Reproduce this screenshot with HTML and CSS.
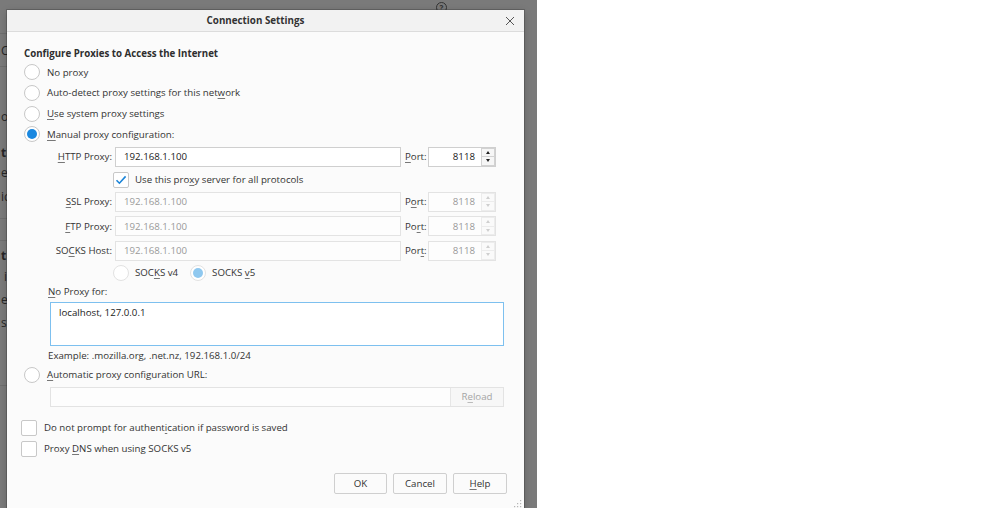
FILE: index.html
```html
<!DOCTYPE html>
<html>
<head>
<meta charset="utf-8">
<title>Connection Settings</title>
<link rel="stylesheet" href="styles.css">
</head>
<body>
<div class="screen">
  <div class="page">
    <div class="backdrop">
      <div class="bd-row h34 line"><span class="help-ico">?</span></div>
      <div class="bd-row h33 line">C</div>
      <div class="bd-row h39"></div>
      <div class="bd-row h20">o</div>
      <div class="bd-row h16"></div>
      <div class="bd-row h20 bold">t</div>
      <div class="bd-row h20">e</div>
      <div class="bd-row h28">ic</div>
      <div class="bd-row h9 line"></div>
      <div class="bd-row h22 line"></div>
      <div class="bd-row h4"></div>
      <div class="bd-row h20 bold">t</div>
      <div class="bd-row h22 ind">is</div>
      <div class="bd-row h24">el</div>
      <div class="bd-row h22">s</div>
      <div class="bd-row h53 line"></div>
    </div>

    <div class="dialog">
      <div class="titlebar">
        <div class="title">Connection Settings</div>
        <div class="close">
          <svg width="10" height="10" viewBox="0 0 10 10"><path d="M1 1L9 9M9 1L1 9" stroke="#555" stroke-width="1" fill="none"/></svg>
        </div>
      </div>
      <div class="body">
        <div class="heading">Configure Proxies to Access the Internet</div>
        <div class="radio-list">
          <div class="radio-row"><span class="radio"></span><span>No proxy</span></div>
          <div class="radio-row"><span class="radio"></span><span>Auto-detect proxy settings for this net<u>w</u>ork</span></div>
          <div class="radio-row"><span class="radio"></span><span><u>U</u>se system proxy settings</span></div>
          <div class="radio-row"><span class="radio on"></span><span><u>M</u>anual proxy configuration:</span></div>
        </div>

        <div class="proxy-block">
          <div class="prow first">
            <span class="plabel"><u>H</u>TTP Proxy:</span>
            <span class="field">192.168.1.100</span>
            <span class="portlabel"><u>P</u>ort:</span>
            <span class="port"><span class="port-val">8118</span><span class="spin"><span class="up"></span><span class="down"></span></span></span>
          </div>
          <div class="share-row">
            <span class="check">
              <svg width="14" height="14" viewBox="0 0 14 14"><path d="M2.5 7.2L5.4 10.2L11.6 3.4" stroke="#1a84d8" stroke-width="1.6" fill="none"/></svg>
            </span>
            <span>Use this pro<u>x</u>y server for all protocols</span>
          </div>
          <div class="prow ssl">
            <span class="plabel"><u>S</u>SL Proxy:</span>
            <span class="field dis">192.168.1.100</span>
            <span class="portlabel">P<u>o</u>rt:</span>
            <span class="port dis"><span class="port-val">8118</span><span class="spin"><span class="up"></span><span class="down"></span></span></span>
          </div>
          <div class="prow">
            <span class="plabel"><u>F</u>TP Proxy:</span>
            <span class="field dis">192.168.1.100</span>
            <span class="portlabel">Po<u>r</u>t:</span>
            <span class="port dis"><span class="port-val">8118</span><span class="spin"><span class="up"></span><span class="down"></span></span></span>
          </div>
          <div class="prow">
            <span class="plabel">SO<u>C</u>KS Host:</span>
            <span class="field dis">192.168.1.100</span>
            <span class="portlabel">Por<u>t</u>:</span>
            <span class="port dis"><span class="port-val">8118</span><span class="spin"><span class="up"></span><span class="down"></span></span></span>
          </div>
          <div class="socks-row">
            <span class="radio dis"></span><span class="socks-lbl">SOC<u>K</u>S v4</span>
            <span class="radio on dis v5"></span><span class="socks-lbl">SOCKS <u>v</u>5</span>
          </div>
        </div>

        <div class="noproxy-label"><u>N</u>o Proxy for:</div>
        <div class="textarea">localhost, 127.0.0.1</div>
        <div class="example">Example: .mozilla.org, .net.nz, 192.168.1.0/24</div>

        <div class="radio-row auto"><span class="radio"></span><span><u>A</u>utomatic proxy configuration URL:</span></div>
        <div class="url-row">
          <span class="url-field"></span>
          <span class="reload">R<u>e</u>load</span>
        </div>

        <div class="check-row first-check"><span class="check"></span><span>Do not prompt for authent<u>i</u>cation if password is saved</span></div>
        <div class="check-row"><span class="check"></span><span>Proxy <u>D</u>NS when using SOCKS v5</span></div>

        <div class="buttons">
          <span class="btn ok">OK</span>
          <span class="btn">Cancel</span>
          <span class="btn"><u>H</u>elp</span>
        </div>
      </div>
      <div class="grip">
        <svg width="8" height="8" viewBox="0 0 8 8"><g fill="#b5b5b5"><rect x="6" y="0" width="1.2" height="1.2"/><rect x="3" y="3" width="1.2" height="1.2"/><rect x="6" y="3" width="1.2" height="1.2"/><rect x="0" y="6" width="1.2" height="1.2"/><rect x="3" y="6" width="1.2" height="1.2"/><rect x="6" y="6" width="1.2" height="1.2"/></g></svg>
      </div>
    </div>
  </div>
  <div class="blank"></div>
</div>
</body>
</html>
```

FILE: styles.css
```css
* { box-sizing: border-box; margin: 0; padding: 0; }
html, body { width: 1000px; height: 508px; overflow: hidden; }
body {
  font-family: "Open Sans", "Noto Sans", sans-serif;
  font-size: 9.7px;
  color: #333;
  background: #fff;
}
u { text-decoration: underline; text-underline-offset: 1.5px; text-decoration-color: #777; }

.screen { display: flex; height: 508px; }
.page { position: relative; width: 537px; height: 508px; background: #7a7a7a; overflow: hidden; flex: none; }
.blank { flex: 1; background: #fff; }

/* faded page behind the modal */
.backdrop { display: flex; flex-direction: column; width: 480px; font-size: 12px; color: #262626; }
.bd-row { display: flex; align-items: center; padding-left: 1px; flex: none; white-space: nowrap; }
.bd-row.line { border-bottom: 1px solid #6e6e6e; }
.bd-row.bold { font-weight: 700; }
.bd-row.ind { padding-left: 4px; }
.h4 { height: 4px; } .h9 { height: 9px; } .h16 { height: 16px; } .h20 { height: 20px; }
.h22 { height: 22px; } .h24 { height: 24px; } .h28 { height: 28px; } .h33 { height: 33px; }
.h34 { height: 34px; align-items: flex-start; padding: 2px 0 0 436px; } .h39 { height: 39px; } .h53 { height: 53px; }
.help-ico {
  width: 11px; height: 11px; border: 1.2px solid #333; border-radius: 50%;
  font-size: 8px; line-height: 9px; text-align: center; color: #333; font-weight: 700;
}

/* dialog */
.dialog {
  position: absolute; left: 7px; top: 10px; width: 517px; height: 500px;
  background: #fbfbfb;
  box-shadow: 0 0 0 1px rgba(0,0,0,0.18), 0 2px 8px rgba(0,0,0,0.2);
  display: flex; flex-direction: column;
}
.titlebar {
  height: 22px; flex: none; display: flex; align-items: center;
  background: #f2f2f2; border-bottom: 1px solid #dcdcdc;
}
.title { flex: 1; text-align: center; font-weight: 700; color: #333; font-size: 9.8px; }
.close { width: 20px; display: flex; align-items: center; justify-content: flex-start; padding-left: 1px; }

.body { padding: 0 17px 0 14px; display: flex; flex-direction: column; }
.heading { margin: 14px 0 0 3px; height: 16px; line-height: 16px; font-weight: 700; color: #2e2e2e; }

.radio-list { display: flex; flex-direction: column; margin-left: 3px; }
.radio-row { display: flex; align-items: center; gap: 7px; height: 20.67px; white-space: nowrap; }
.radio {
  width: 16px; height: 16px; border: 1px solid #c8c8c8; border-radius: 50%; background: #fff;
  flex: none; display: flex; align-items: center; justify-content: center;
}
.radio.on::after { content: ""; width: 10px; height: 10px; border-radius: 50%; background: #1a88e0; }
.radio.dis { border-color: #e2e2e2; }
.radio.on.dis::after { background: #8fc8ef; }

.check {
  width: 16px; height: 16px; border: 1px solid #c8c8c8; border-radius: 2px; background: #fff;
  flex: none; display: flex; align-items: center; justify-content: center;
}

/* proxy grid */
.proxy-block { margin-left: 19px; display: flex; flex-direction: column; }
.prow { display: flex; align-items: center; height: 20px; margin-top: 4.5px; }
.prow.first { margin-top: 2px; }
.prow.ssl { margin-top: 2px; }
.plabel { width: 75px; text-align: right; padding-right: 3px; white-space: nowrap; }
.field {
  width: 286px; height: 20px; border: 1px solid #cfcfcf; background: #fff;
  padding-left: 8px; display: flex; align-items: center; color: #222;
}
.field.dis { border-color: #e3e3e3; color: #9a9a9a; background: #fdfdfd; }
.portlabel { width: 27px; padding-left: 4px; white-space: nowrap; }
.port {
  width: 68px; height: 20px; border: 1px solid #cfcfcf; background: #fff;
  display: flex; align-items: center; color: #222;
}
.port.dis { border-color: #e3e3e3; color: #9a9a9a; background: #fdfdfd; }
.port-val { flex: 1; text-align: right; padding-right: 6px; }
.spin {
  width: 14px; height: 18px; display: flex; flex-direction: column;
  border: 1px solid #d2d2d2; background: #f6f6f6;
}
.port.dis .spin { border-color: #ececec; background: #fafafa; }
.up, .down { flex: 1; display: flex; align-items: center; justify-content: center; }
.up { border-bottom: 1px solid #d2d2d2; }
.port.dis .up { border-bottom-color: #ececec; }
.up::after { content: ""; border-left: 2.5px solid transparent; border-right: 2.5px solid transparent; border-bottom: 3px solid #222; }
.down::after { content: ""; border-left: 2.5px solid transparent; border-right: 2.5px solid transparent; border-top: 3px solid #222; }
.port.dis .up::after { border-bottom-color: #cfcfcf; }
.port.dis .down::after { border-top-color: #cfcfcf; }

.share-row { display: flex; align-items: center; gap: 6px; height: 20px; margin-top: 3px; padding-left: 73px; white-space: nowrap; }

.socks-row { display: flex; align-items: center; height: 20px; margin-top: 2px; padding-left: 73px; white-space: nowrap; }
.socks-lbl { margin-left: 6px; }
.radio.v5 { margin-left: 12px; }

.noproxy-label { margin: 1px 0 0 27px; height: 16px; line-height: 16px; }
.textarea {
  margin: 2px 0 0 29px; width: 454px; height: 44px; border: 1px solid #7dc0ef; background: #fff;
  padding: 2px 8px; line-height: 15px; color: #222;
}
.example { margin: 2px 0 0 27px; height: 16px; line-height: 16px; }

.radio-row.auto { margin: 1px 0 0 3px; height: 20px; }
.url-row {
  margin: 2px 0 0 29px; width: 454px; height: 20px; display: flex;
  border: 1px solid #e3e3e3; background: #fdfdfd;
}
.url-field { flex: 1; }
.reload {
  width: 53px; border-left: 1px solid #e6e6e6; background: #f7f7f7; color: #a5a5a5;
  display: flex; align-items: center; justify-content: center;
}
.reload u { text-decoration-color: #bbb; }

.check-row { display: flex; align-items: center; gap: 7px; height: 20px; margin-top: 1px; white-space: nowrap; }
.check-row.first-check { margin-top: 11px; }

.buttons { display: flex; justify-content: flex-end; gap: 6px; margin-top: 14px; }
.btn {
  width: 54px; height: 21px; border: 1px solid #cfcfcf; border-radius: 2px; background: #fbfbfb;
  display: flex; align-items: center; justify-content: center; color: #333;
}
.btn.ok { width: 53px; }

.grip { position: absolute; right: 2px; bottom: 2px; display: flex; }
```
